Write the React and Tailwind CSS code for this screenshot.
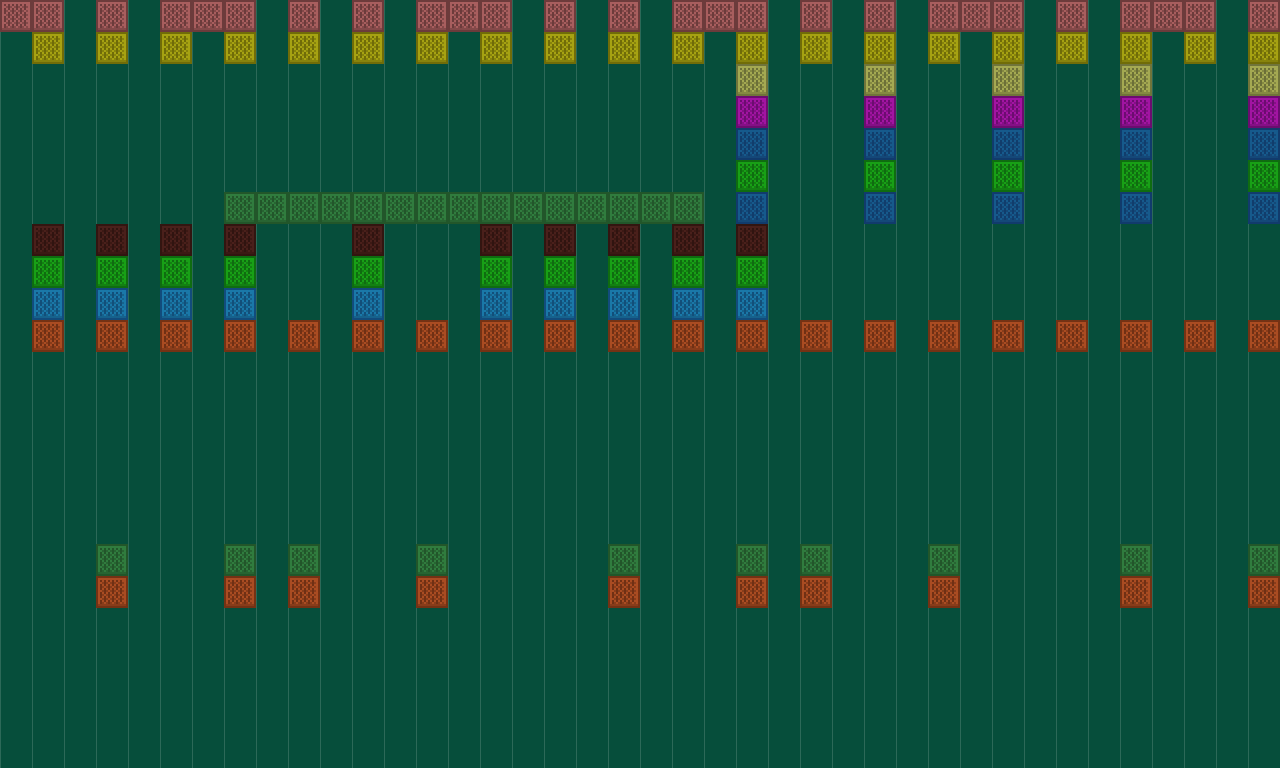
const TILE_ART = [
  "oooooooooooooooo",
  "o..............o",
  "o.#.#.#.#.#.#..o",
  "o..m#m.m#m.m#m.o",
  "o.#.#.#.#.#.#..o",
  "o.#m.m#m.m#m.m.o",
  "o.#.#.#.#.#.#..o",
  "o..m#m.m#m.m#m.o",
  "o.#.#.#.#.#.#..o",
  "o.#m.m#m.m#m.m.o",
  "o.#.#.#.#.#.#..o",
  "o..m#m.m#m.m#m.o",
  "o.#.#.#.#.#.#..o",
  "o.#m.m#m.m#m.m.o",
  "ommmmmmmmmmmmmmo",
  "oooooooooooooooo",
];

const PALETTES = {
  p: { edge: "#6c3b3b", light: "#a85e5e", mid: "#844949", dark: "#6c3b3b" },
  y: { edge: "#706c08", light: "#a6a212", mid: "#87830c", dark: "#706c08" },
  k: { edge: "#70743a", light: "#a4a952", mid: "#858942", dark: "#6c7038" },
  m: { edge: "#6c0c70", light: "#a214a2", mid: "#841086", dark: "#6c0c70" },
  b: { edge: "#113b6c", light: "#165a8c", mid: "#144878", dark: "#113d6c" },
  g: { edge: "#0f6c10", light: "#18a016", mid: "#138012", dark: "#0f6c10" },
  f: { edge: "#22562a", light: "#307c3e", mid: "#286432", dark: "#22562a" },
  n: { edge: "#321510", light: "#4a201b", mid: "#3c1914", dark: "#301410" },
  s: { edge: "#124c7c", light: "#1a78a8", mid: "#16628c", dark: "#124f7a" },
  o: { edge: "#743214", light: "#aa4c22", mid: "#883c1a", dark: "#703014" },
};

const LEVEL = [
  "pp.p.ppp.p.p.ppp.p.p.ppp.p.p.ppp.p.ppp.p",
  ".y.y.y.y.y.y.y.y.y.y.y.y.y.y.y.y.y.y.y.y",
  ".......................k...k...k...k...k",
  ".......................m...m...m...m...m",
  ".......................b...b...b...b...b",
  ".......................g...g...g...g...g",
  ".......fffffffffffffff.b...b...b...b...b",
  ".n.n.n.n...n...n.n.n.n.n................",
  ".g.g.g.g...g...g.g.g.g.g................",
  ".s.s.s.s...s...s.s.s.s.s................",
  ".o.o.o.o.o.o.o.o.o.o.o.o.o.o.o.o.o.o.o.o",
  "",
  "",
  "",
  "",
  "",
  "",
  "...f...f.f...f.....f...f.f...f.....f...f",
  "...o...o.o...o.....o...o.o...o.....o...o",
];

function shapeOf(symbol) {
  let d = "";
  TILE_ART.forEach((line, y) => {
    for (let x = 0; x < line.length; x++) {
      if (line[x] === symbol) d += `M${x} ${y}h1v1h-1z`;
    }
  });
  return d;
}

const LIGHT = shapeOf(".");
const MID = shapeOf("m");
const DARK = shapeOf("#");

function Tile({ type }) {
  const palette = PALETTES[type];

  if (!palette) {
    return <div className="size-8 shrink-0" />;
  }

  return (
    <svg
      viewBox="0 0 16 16"
      shapeRendering="crispEdges"
      className="size-8 shrink-0"
      aria-hidden="true"
    >
      <rect width="16" height="16" fill={palette.edge} />
      <path d={LIGHT} fill={palette.light} />
      <path d={MID} fill={palette.mid} />
      <path d={DARK} fill={palette.dark} />
    </svg>
  );
}

export default function App() {
  return (
    <main className="min-h-screen overflow-hidden bg-[#064e3b] bg-[linear-gradient(to_right,#2c6958_1px,transparent_1px)] bg-[length:32px_100%]">
      {LEVEL.map((row, y) => (
        <div key={y} className="flex h-8">
          {row.split("").map((type, x) => (
            <Tile key={x} type={type} />
          ))}
        </div>
      ))}
    </main>
  );
}
